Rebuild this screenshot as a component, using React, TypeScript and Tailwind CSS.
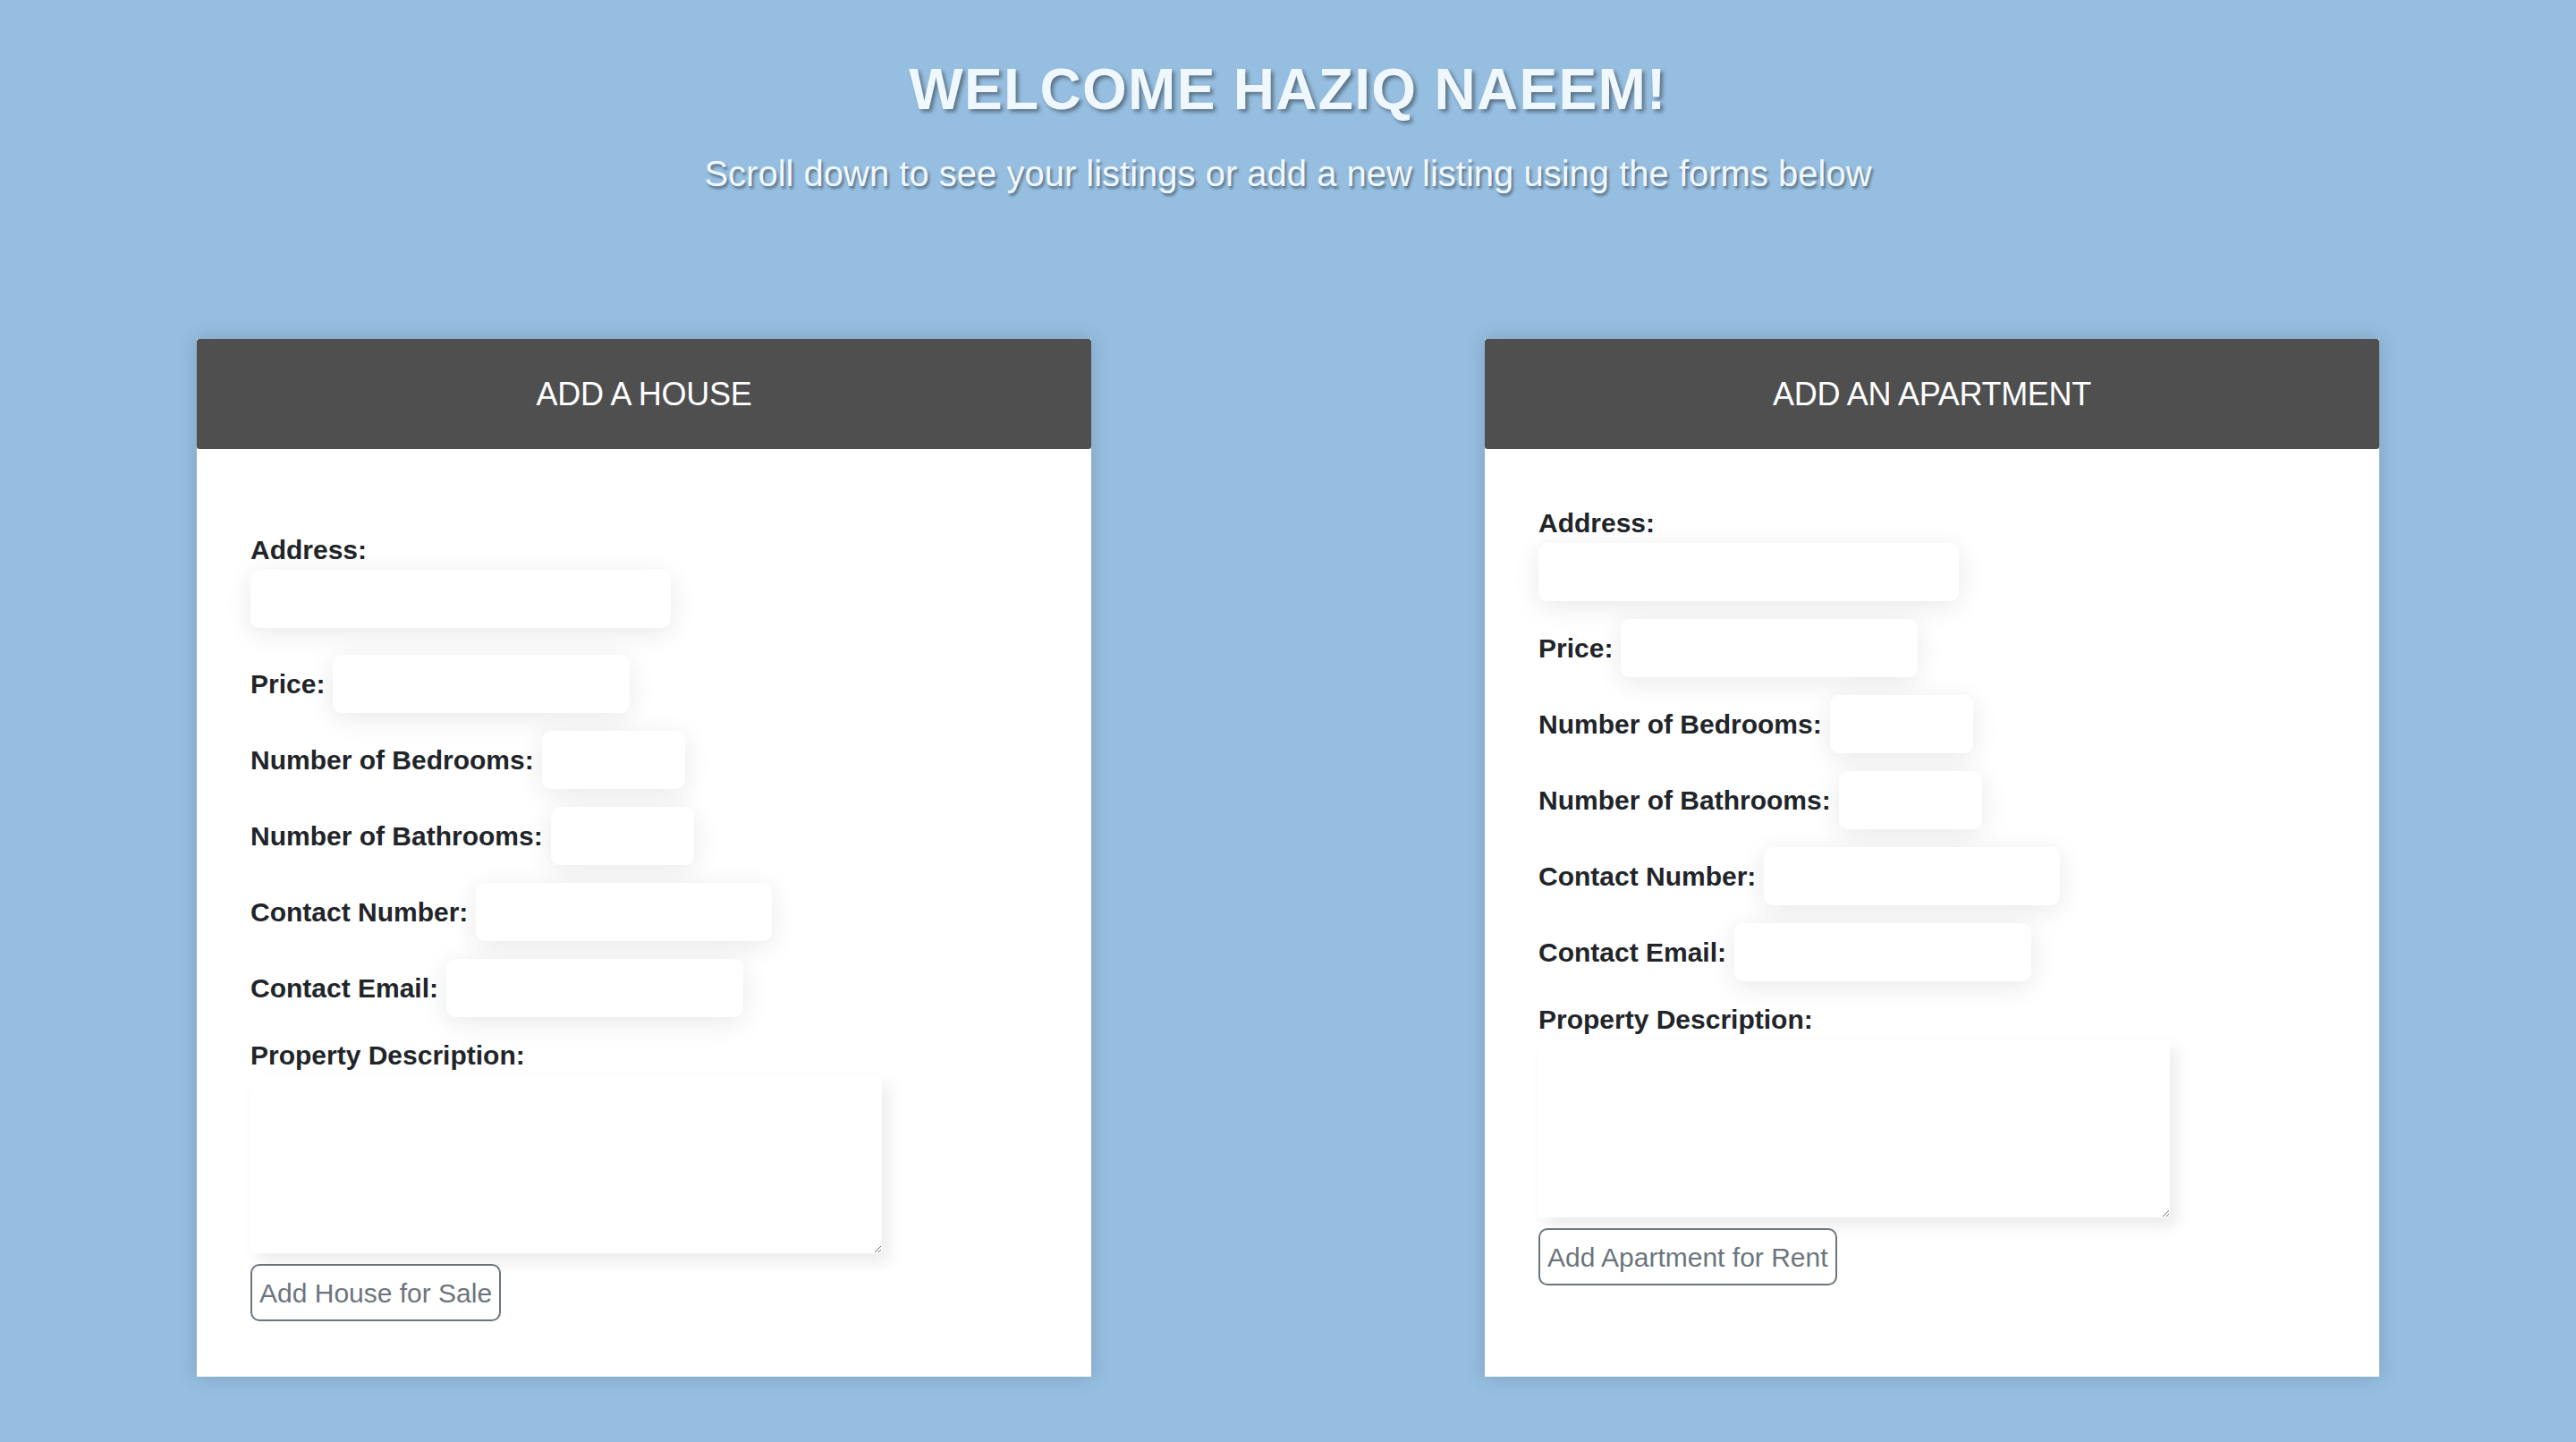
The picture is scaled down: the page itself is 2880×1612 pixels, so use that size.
import React from "react";

type Field = { label: string; w: string };

const fields: Field[] = [
  { label: "Price:", w: "w-[332px]" },
  { label: "Number of Bedrooms:", w: "w-[160px]" },
  { label: "Number of Bathrooms:", w: "w-[160px]" },
  { label: "Contact Number:", w: "w-[331px]" },
  { label: "Contact Email:", w: "w-[332px]" },
];

const inputCls =
  "h-[65px] rounded-[10px] bg-white shadow-[0_6px_30px_rgba(0,0,0,0.09)] outline-none px-3 text-[30px]";

function Card({
  title,
  button,
  house,
}: {
  title: string;
  button: string;
  house: boolean;
}) {
  return (
    <div className="w-[1000px] bg-white shadow-[0_0_22px_rgba(0,0,0,0.16)] flex flex-col">
      <div className="h-[123px] rounded-[3px] bg-[#4f4f4f] flex items-center justify-center">
        <h2 className="text-[36px] font-light text-white leading-none tracking-[-0.3px]">
          {title}
        </h2>
      </div>
      <form
        className={
          house
            ? "pl-[60px] pt-[90px] pb-[62px] flex flex-col"
            : "pl-[60px] pt-[60px] pb-[62px] flex flex-col"
        }
        onSubmit={(e) => e.preventDefault()}
      >
        <label className="block text-[30px] leading-[45px] font-bold text-[#212529]">
          Address:
        </label>
        <input type="text" className={`${inputCls} w-[470px] block`} />
        <div
          className={
            house
              ? "mt-[30px] flex flex-col gap-[20px]"
              : "mt-[20px] flex flex-col gap-[20px]"
          }
        >
          {fields.map((f) => (
            <div key={f.label} className="flex items-center gap-[9px]">
              <label className="text-[30px] leading-[45px] font-bold text-[#212529]">
                {f.label}
              </label>
              <input type="text" className={`${inputCls} ${f.w}`} />
            </div>
          ))}
        </div>
        <label className="mt-[20px] block text-[30px] leading-[45px] font-bold text-[#212529]">
          Property Description:
        </label>
        <textarea className="block h-[199px] w-[706px] rounded-[4px] bg-white shadow-[8px_10px_18px_rgba(0,0,0,0.08)] outline-none p-2 text-[30px]" />
        <div className="mt-[12px]">
          <button
            type="submit"
            className="h-[64px] px-[8px] rounded-[10px] border-2 border-[#6c757d] bg-white text-[30px] leading-[45px] text-[#6c757d]"
          >
            {button}
          </button>
        </div>
      </form>
    </div>
  );
}

export default function App() {
  return (
    <div className="min-h-screen w-full bg-[#96bee0] font-['Liberation_Sans',Arial,sans-serif] pb-[73px]">
      <div className="pt-[68px] flex flex-col items-center text-[#f0f8ff]">
        <h1 className="text-[64px] leading-[64px] font-bold tracking-[1.3px] [text-shadow:3px_3px_4px_rgba(0,0,0,0.4)]">
          WELCOME HAZIQ NAEEM!
        </h1>
        <p className="mt-[42px] text-[40px] leading-[40px] [text-shadow:2px_3px_3px_rgba(0,0,0,0.4)]">
          Scroll down to see your listings or add a new listing using the forms below
        </p>
      </div>
      <div className="mt-[165px] grid grid-cols-2">
        <div className="flex justify-center">
          <Card title="ADD A HOUSE" button="Add House for Sale" house={true} />
        </div>
        <div className="flex justify-center">
          <Card title="ADD AN APARTMENT" button="Add Apartment for Rent" house={false} />
        </div>
      </div>
    </div>
  );
}
